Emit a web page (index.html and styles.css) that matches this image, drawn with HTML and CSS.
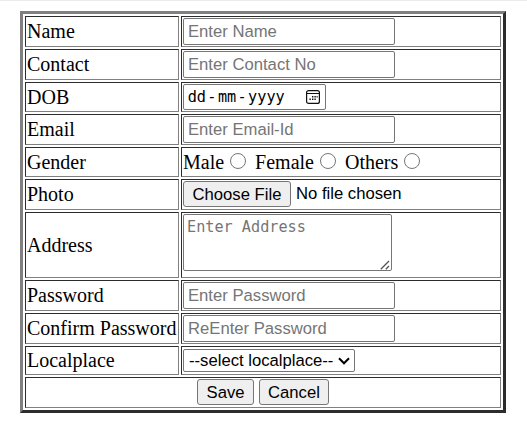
FILE: index.html
```html
<!DOCTYPE html>
<html lang="en">
<head>
<meta charset="utf-8">
<title>Registration</title>
<link rel="stylesheet" href="styles.css">
</head>
<body>
<form>
<table class="form-table">
<tr class="row"><td class="label">Name</td><td><input class="field" type="text" placeholder="Enter Name"></td></tr>
<tr class="row"><td>Contact</td><td><input class="field" type="text" placeholder="Enter Contact No"></td></tr>
<tr class="row row-mid"><td>DOB</td><td><div class="date"><span>dd</span><span>-</span><span>mm</span><span>-</span><span>yyyy</span><svg class="calendar" viewBox="0 0 14 14"><rect x=".6" y=".6" width="12.8" height="12.8" rx="2" fill="none" stroke="#111" stroke-width="1.2"/><path d="M1 3.5h12" stroke="#111" stroke-width="1"/><path d="M6 6h1.4v1.4H6zM8.4 6h1.4v1.4H8.4zM10.6 6h1v1.4h-1zM3.4 8.6h1.4V10H3.4zM6 8.6h1.4V10H6zM8.4 8.6h1.4V10H8.4z" fill="#111"/></svg></div></td></tr>
<tr class="row"><td>Email</td><td><input class="field" type="text" placeholder="Enter Email-Id"></td></tr>
<tr class="row row-mid"><td>Gender</td><td><div class="radios"><label>Male<input type="radio" name="gender"></label><label>Female<input type="radio" name="gender"></label><label>Others<input type="radio" name="gender"></label></div></td></tr>
<tr class="row"><td>Photo</td><td><div class="file"><button class="button choose" type="button">Choose File</button><span>No file chosen</span></div></td></tr>
<tr class="row row-tall"><td>Address</td><td class="top"><div class="area-wrap"><textarea class="area" placeholder="Enter Address"></textarea><svg class="grip" viewBox="0 0 10 10"><path d="M.8 9.2L9 1M5.8 9.2L9 6" stroke="#555" stroke-width="1.3" fill="none"/></svg></div></td></tr>
<tr class="row"><td>Password</td><td><input class="field" type="password" placeholder="Enter Password"></td></tr>
<tr class="row"><td>Confirm Password</td><td><input class="field" type="password" placeholder="ReEnter Password"></td></tr>
<tr class="row row-short"><td>Localplace</td><td><div class="select"><span>--select localplace--</span><svg class="chevron" viewBox="0 0 12 8"><path d="M1 1.3l5 5 5-5" fill="none" stroke="#000" stroke-width="2"/></svg></div></td></tr>
<tr class="row"><td colspan="2"><div class="actions"><button class="button save" type="button">Save</button><button class="button cancel" type="button">Cancel</button></div></td></tr>
</table>
</form>
</body>
</html>
```
FILE: styles.css
```css
* { box-sizing: border-box; }
body {
  margin: 0;
  height: 435px;
  padding: 10px 0 0 20px;
  border-top: 1px solid #ebebeb;
  background: #fff;
  color: #000;
  font: 20px/23px "Liberation Serif", serif;
  overflow: hidden;
}
.form-table {
  width: 486px;
  table-layout: fixed;
  border: 3px solid;
  border-color: #808080 #2c2c2c #2c2c2c #808080;
  border-collapse: separate;
  border-spacing: 2px;
}
.row { height: 31px; }
.row-mid { height: 30px; }
.row-short { height: 29px; }
.row-tall { height: 66px; }
td {
  padding: 1px;
  border: 1px solid;
  border-color: #2c2c2c #808080 #808080 #2c2c2c;
  vertical-align: middle;
  white-space: nowrap;
}
.label { width: 154px; }
.top { vertical-align: top; }
input, button, textarea { margin: 0; }
.field, .date, .file, .select, .button {
  font: 16.667px/19px "Liberation Sans", sans-serif;
  color: #000;
}
.field, .date, .select, .area {
  border: 1px solid #767676;
  border-radius: 2px;
  background: #fff;
}
.field {
  display: block;
  width: 212px;
  height: 27px;
  padding: 1px 4px;
}
::placeholder { color: #757575; }
.date {
  display: flex;
  align-items: center;
  width: 143px;
  height: 26px;
  padding: 0 5px 0 3px;
  font-family: "DejaVu Sans Mono", monospace;
  font-size: 15.2px;
}
.date span { padding: 0 .7px; }
.calendar { width: 14px; height: 14px; margin-left: auto; }
.radios { display: flex; gap: 9px; height: 26px; align-items: center; }
.radios label { display: flex; align-items: center; }
.radios input { width: 16px; height: 16px; margin: 0 0 3px 6px; }
.file { display: flex; gap: 5px; height: 27px; }
.file span { line-height: 26px; }
.button {
  height: 26px;
  padding: 0;
  border: 1px solid #767676;
  border-radius: 3px;
  background: #efefef;
}
.choose { width: 108px; }
.area-wrap { position: relative; width: 209px; height: 57px; }
.area {
  display: block;
  width: 209px;
  height: 57px;
  padding: 3px;
  resize: none;
  font: 15.2px/19px "DejaVu Sans Mono", monospace;
}
.grip { position: absolute; right: 2px; bottom: 1px; width: 10px; height: 10px; }
.select {
  display: flex;
  align-items: center;
  width: 172px;
  height: 23px;
  padding: 0 4px 0 5px;
}
.chevron { width: 12px; height: 8px; margin-left: auto; }
.actions { display: flex; justify-content: center; gap: 5px; height: 27px; }
.save { width: 57px; }
.cancel { width: 70px; }
```
